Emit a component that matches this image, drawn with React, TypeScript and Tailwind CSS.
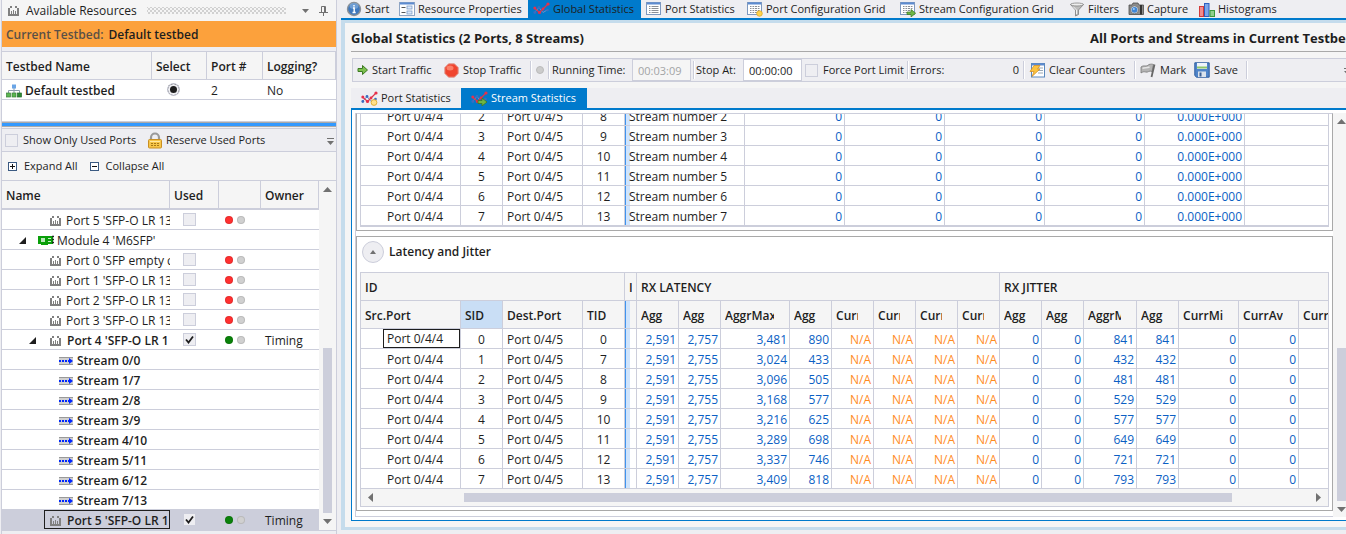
import React from "react";

const PortIcon = () => (
  <svg width="12" height="10" viewBox="0 0 12 10" className="shrink-0" fill="#808080" shapeRendering="crispEdges">
    <path d="M0 2h2V0h2v2H2v6h7V2H7V0h2v2h2v8H0z" />
    <path d="M3 5h1v3H3zM5 4h1v4H5zM7 5h1v3H7z" />
  </svg>
);

const TreeIcon = () => (
  <svg width="16" height="14" viewBox="0 0 16 14" className="shrink-0">
    <path d="M8 4v3M2.500 9V6.500h11V9M8 6v3" stroke="#8a9aaa" fill="none" />
    <rect x="6" y="0.500" width="4" height="4" fill="#6aa5e6" />
    <rect x="0.500" y="9" width="4" height="4" fill="#5cb551" stroke="#38803a" strokeWidth=".7" />
    <rect x="6" y="9" width="4" height="4" fill="#5cb551" stroke="#38803a" strokeWidth=".7" />
    <rect x="11.500" y="9" width="4" height="4" fill="#2f8a35" stroke="#226b2a" strokeWidth=".7" />
  </svg>
);

const LockIcon = () => (
  <svg width="16" height="17" viewBox="0 0 16 17" className="shrink-0">
    <path d="M4 9V5.500a4 4 0 0 1 8 0V9" fill="none" stroke="#9a9a9a" strokeWidth="2.200" />
    <rect x="1.500" y="7.500" width="13" height="8.500" rx="1" fill="#f7c64a" stroke="#c98f22" />
    <path d="M3 9.500h10" stroke="#ffe9a3" />
    <path d="M4 11.500h2m1 0h2m1 0h2M4 13.500h2m1 0h2m1 0h2" stroke="#a97a17" />
  </svg>
);

const ModuleIcon = () => (
  <svg width="17" height="11" viewBox="0 0 17 11" className="shrink-0">
    <path d="M0 1h15v8h-5v1H3V9H0z" fill="#0a9f0a" />
    <rect x="3" y="3" width="4" height="4" fill="#b9e6b9" />
    <path d="M10 3.500h3M10 6.500h3" stroke="#c9eec9" />
    <path d="M14 1.500h2M14 4.500h2M14 7.500h2" stroke="#222" strokeWidth="1.500" />
  </svg>
);

const StreamIcon = () => (
  <svg width="14" height="10" viewBox="0 0 14 10" className="shrink-0">
    <rect y="1" width="14" height="8" fill="#d0d0d0" />
    <path d="M0 1.500h14M0 8.500h14" stroke="#999" />
    <path d="M0 5h10" stroke="#0026ff" strokeWidth="2" strokeDasharray="2 1" />
    <path d="M10 2l4 3-4 3z" fill="#0026ff" />
  </svg>
);

const InfoIcon = () => (
  <svg width="16" height="16" viewBox="0 0 16 16" className="shrink-0">
    <circle cx="8" cy="8" r="6.500" fill="#3f78bd" stroke="#8a9097" strokeWidth="1.400" />
    <ellipse cx="8" cy="5" rx="4.500" ry="3" fill="#8db5e2" opacity=".6" />
    <path d="M8 4v1.600M7 7h1.200v4.500M6.500 11.500h3.200" stroke="#fff" strokeWidth="1.400" fill="none" />
  </svg>
);

const PropsIcon = () => (
  <svg width="16" height="14" viewBox="0 0 16 14" className="shrink-0">
    <rect x=".5" y=".5" width="15" height="13" fill="#fff" stroke="#8fa5c4" />
    <path d="M1 1.500h14" stroke="#5c8bd0" strokeWidth="2" />
    <path d="M2.500 5.500h4M2.500 10.500h4" stroke="#555" />
    <rect x="8" y="4" width="5" height="3" fill="#dbe8fa" stroke="#7f9dc7" strokeWidth=".8" />
    <rect x="8" y="9" width="5" height="3" fill="#dbe8fa" stroke="#7f9dc7" strokeWidth=".8" />
  </svg>
);

const ListIcon = ({ badge }: { badge?: "dot" | "arrow" }) => (
  <svg width="16" height="15" viewBox="0 0 16 15" className="shrink-0">
    <rect x=".5" y=".5" width="14" height="12" fill="#fff" stroke="#7d98bf" />
    <path d="M1 1.500h13" stroke="#5c8bd0" strokeWidth="2" />
    <path d="M3 4.500h1.500M3 6.500h1.500M3 8.500h1.500M3 10.500h1.500M5.500 4.500h7M5.500 6.500h7M5.500 8.500h7M5.500 10.500h7" stroke="#8b8f96" />
    {badge && <path d="M7.500 4v7M10.500 4v7" stroke="#fff" strokeWidth=".8" />}
    {badge === "dot" && <circle cx="12.500" cy="11.500" r="2.800" fill="#ffd34d" stroke="#d8a21c" strokeWidth=".7" />}
    {badge === "arrow" && <path d="M7 10h4V7.500l4.700 3.700L11 15v-2.500H7z" fill="#6fb544" stroke="#3c7a22" strokeWidth=".7" />}
  </svg>
);

const ChartIcon = ({ badge }: { badge?: "dot" | "arrow" }) => (
  <svg width="17" height="15" viewBox="0 0 17 15" className="shrink-0">
    <path d="M1.500 10.500L6 5.500l4 5 5-3" fill="none" stroke="#6a8cc8" />
    <g fill="#3b6cc0">
      <circle cx="1.800" cy="10.500" r="1.400" /><circle cx="6" cy="5.500" r="1.400" /><circle cx="14.500" cy="8" r="1.300" />
    </g>
    <path d="M1.500 6l5 4.500L10 7l5-5" fill="none" stroke="#e0344a" strokeWidth="1.200" />
    <g fill="#e8304a">
      <circle cx="1.800" cy="6" r="1.500" /><circle cx="6.500" cy="10.500" r="1.600" /><circle cx="10" cy="7" r="1.400" /><circle cx="15" cy="2" r="1.600" />
    </g>
    {badge === "dot" && <circle cx="13" cy="11.500" r="2.900" fill="#ffe08a" stroke="#d8a21c" strokeWidth=".8" />}
    {badge === "arrow" && <path d="M7 9.500h4V7l5 4-5 4v-2.500H7z" fill="#6fb544" stroke="#3c7a22" strokeWidth=".8" />}
  </svg>
);

const FunnelIcon = () => (
  <svg width="16" height="15" viewBox="0 0 16 15" className="shrink-0">
    <path d="M1.500 2.500L6.500 8v6l3-1.500V8l5-5.500z" fill="#bdbdbd" stroke="#7c7c7c" strokeWidth=".8" />
    <path d="M4 4.500l3.500 3.500v4" stroke="#f4f4f4" fill="none" />
    <ellipse cx="8" cy="2.500" rx="6.500" ry="1.500" fill="#eee" stroke="#858585" strokeWidth=".8" />
  </svg>
);

const CameraIcon = () => (
  <svg width="16" height="14" viewBox="0 0 16 14" className="shrink-0">
    <path d="M1 3h3l1-2h5l1 2h4.500v9.500H1z" fill="#8b8b8b" stroke="#4c4c4c" strokeWidth=".8" />
    <path d="M13 3v9.500" stroke="#333" strokeWidth="2" />
    <circle cx="6.500" cy="7.800" r="4" fill="#d6dbe2" stroke="#555" strokeWidth=".6" />
    <circle cx="6.500" cy="7.800" r="2.900" fill="#3f86d6" />
    <circle cx="5.800" cy="7" r="1" fill="#a8d0f8" />
  </svg>
);

const HistIcon = () => (
  <svg width="16" height="15" viewBox="0 0 16 15" className="shrink-0">
    <rect x=".5" y="4.500" width="4" height="10" fill="#f28c8c" stroke="#d33a3a" />
    <rect x="5.500" y="1.500" width="4.500" height="13" fill="#7ba6ea" stroke="#2d5fc0" />
    <rect x="11" y="8.500" width="4.500" height="6" fill="#8fd08c" stroke="#3a9a3c" />
  </svg>
);

const StartIcon = () => (
  <svg width="12" height="12" viewBox="0 0 12 12" className="shrink-0">
    <path d="M1 4.500h4.500V1.500L10.500 6l-5 4.500v-3H1z" fill="#7dc04e" stroke="#3c7a22" />
  </svg>
);

const StopIcon = () => (
  <svg width="15" height="15" viewBox="0 0 15 15" className="shrink-0">
    <path d="M4.600.8h5.800l3.800 3.800v5.800l-3.800 3.800H4.600L.8 10.400V4.600z" fill="#f0452f" stroke="#e09a90" />
    <ellipse cx="6" cy="5" rx="3.500" ry="2.500" fill="#ff9a82" opacity=".7" />
  </svg>
);

const ClearIcon = () => (
  <svg width="16" height="15" viewBox="0 0 16 15" className="shrink-0">
    <rect x="2.500" y=".5" width="13" height="13.500" fill="#fff" stroke="#5a88bd" />
    <path d="M3 1.500h12" stroke="#5c8bd0" strokeWidth="2" />
    <path d="M9 5h5M9 7.500h5M9 10h5" stroke="#9aa8b5" />
    <path d="M5 2.500h6L8.500 6H11L3 13.500 5 8.500H1z" fill="#fbc340" stroke="#d08a1c" strokeWidth=".7" />
  </svg>
);

const FlagIcon = () => (
  <svg width="16" height="15" viewBox="0 0 16 15" className="shrink-0">
    <path d="M1 4c3-2.500 5 .5 8-2.500 2-.5 3-.5 4.500 0L12 8.500c-3-1.500-4 1.500-6.500.5-2-.6-3 0-4.500 1z" fill="#b4b4b4" stroke="#777" strokeWidth=".8" />
    <path d="M14.500 1.500L11.500 14" stroke="#666" strokeWidth="1.800" />
    <path d="M2.500 5.500c2-1.500 4 0 7-1.500" stroke="#e4e4e4" strokeWidth="1.500" fill="none" />
  </svg>
);

const SaveIcon = () => (
  <svg width="16" height="16" viewBox="0 0 16 16" className="shrink-0">
    <path d="M.8.800h14.400v14.400H2.500L.8 13.500z" fill="#4f84c9" stroke="#2f5e9e" />
    <rect x="3" y="1" width="10" height="6" fill="#eef4fb" />
    <path d="M3 5.500h10" stroke="#8fc76a" strokeWidth="2" />
    <rect x="4" y="9.500" width="8" height="5.500" fill="#dbe3ec" />
    <rect x="5.500" y="10.500" width="2" height="4" fill="#3a5f94" />
  </svg>
);

const BoxSign = ({ plus }: { plus?: boolean }) => (
  <svg width="9" height="9" viewBox="0 0 9 9" className="shrink-0">
    <rect x=".5" y=".5" width="8" height="8" fill="#fff" stroke="#3b5a82" />
    <path d={plus ? "M2 4.500h5M4.500 2v5" : "M2 4.500h5"} stroke="#111" />
  </svg>
);

const Tri = ({ dir }: { dir: "up" | "down" | "left" | "right" }) => {
  const d = { up: "M0 7L4.500 2 9 7z", down: "M0 2h9L4.500 7z", left: "M7 0v9L2 4.500z", right: "M2 0l5 4.500L2 9z" }[dir];
  return <svg width="9" height="9" viewBox="0 0 9 9" className="shrink-0" fill="#717171"><path d={d} /></svg>;
};

const Overflow = () => (
  <svg width="7" height="8" viewBox="0 0 7 8" className="shrink-0" fill="#717171">
    <path d="M0 0h7v1H0zM0 3h7L3.500 7z" />
  </svg>
);

const Expander = () => (
  <svg width="7" height="7" viewBox="0 0 7 7" className="shrink-0"><path d="M7 0v7H0z" fill="#1e1e1e" /></svg>
);

const Check = ({ label, checked = false }: { label: string; checked?: boolean }) => (
  <span className="relative inline-flex size-[13px] shrink-0">
    <input type="checkbox" aria-label={label} defaultChecked={checked}
      className="peer size-[13px] appearance-none border border-[#cccedb] bg-[#eeeef2]" />
    <svg viewBox="0 0 13 13" className="pointer-events-none absolute inset-0 hidden size-[13px] peer-checked:block">
      <path d="M3 6.500l2.500 3L10 3.500" fill="none" stroke="#1e1e1e" strokeWidth="1.800" />
    </svg>
  </span>
);

type Node = { kind: "port" | "module" | "stream"; name: string; used?: boolean; led?: "red" | "green"; owner?: string; open?: boolean; selected?: boolean };

const nodes: Node[] = [
  { kind: "port", name: "Port 5 'SFP-O LR 13", used: false, led: "red" },
  { kind: "module", name: "Module 4 'M6SFP'", open: true },
  { kind: "port", name: "Port 0 'SFP empty c", used: false, led: "red" },
  { kind: "port", name: "Port 1 'SFP-O LR 13", used: false, led: "red" },
  { kind: "port", name: "Port 2 'SFP-O LR 13", used: false, led: "red" },
  { kind: "port", name: "Port 3 'SFP-O LR 13", used: false, led: "red" },
  { kind: "port", name: "Port 4 'SFP-O LR 1", used: true, led: "green", owner: "Timing", open: true },
  ...["0/0", "1/7", "2/8", "3/9", "4/10", "5/11", "6/12", "7/13"].map((s): Node => ({ kind: "stream", name: `Stream ${s}` })),
  { kind: "port", name: "Port 5 'SFP-O LR 1", used: true, led: "green", owner: "Timing", selected: true },
];

const NodeName = ({ n }: { n: Node }) => {
  if (n.kind === "module")
    return <div className="flex h-[19px] items-center pt-[2px] pl-[17px]"><Expander /><span className="w-3" /><ModuleIcon /><span className="pl-[2px]">{n.name}</span></div>;
  if (n.kind === "stream")
    return <div className="flex h-[19px] items-center gap-1 pt-[2px] pl-[57px] font-semibold"><StreamIcon />{n.name}</div>;
  return (
    <div className={n.selected ? "ml-[42px] flex h-[19px] items-center border border-[#1e1e1e] pt-[2px]" : "flex h-[19px] items-center pt-[2px] pl-[27px]"}>
      <span className={n.selected ? "w-[5px] shrink-0" : "w-[21px] shrink-0"}>{n.open && <Expander />}</span>
      <PortIcon />
      <span className={n.used ? "overflow-hidden pl-[5px] font-semibold" : "overflow-hidden pl-1"}>{n.name}</span>
    </div>
  );
};

const Led = ({ color }: { color: string }) => <span className={`size-2 rounded-full border border-black/10 ${color}`} />;

const thBase = "border-r border-[#cccedb] p-0 pt-[2px] pl-1 text-left font-semibold";
const th = thBase + " h-7 border-b bg-[#f5f5f5]";
const thTall = thBase + " h-[29px] border-b-2 bg-[#f5f5f5]";
const line = "h-5 border-b border-[#cccedb] p-0";

function ResourcesPanel() {
  return (
    <aside className="ml-px w-[336px] shrink-0 border-x border-[#cccedb]">
      <header className="flex h-[21px] items-center bg-[#f5f5f5] pr-2 pl-[6px]">
        <PortIcon />
        <h2 className="pl-[6px]">Available Resources</h2>
        <span className="ml-[10px] h-[7px] flex-1 bg-[radial-gradient(circle,#aaa_0.5px,transparent_0.9px),radial-gradient(circle,#aaa_0.5px,transparent_0.9px)] bg-[size:4px_4px] bg-[position:0_0,2px_2px]" />
        <button aria-label="Panel menu" className="ml-4"><svg width="7" height="4" viewBox="0 0 7 4"><path d="M0 0h7L3.500 4z" fill="#717171" /></svg></button>
        <button aria-label="Pin panel" className="ml-[10px]">
          <svg width="9" height="10" viewBox="0 0 9 10" fill="none" stroke="#717171"><path d="M2.500 6V.5h4V6M5.500 0v6M0 6.500h9M4.500 6v4" /></svg>
        </button>
      </header>
      <div className="flex h-[26px] items-center gap-[5px] bg-[#fca13c] pt-px pl-1 font-semibold">
        <span className="text-[#5a5046]">Current Testbed:</span><span>Default testbed</span>
      </div>
      <div className="mt-1 h-[71px] border-y border-[#cccedb] bg-white">
        <table className="w-full table-fixed border-separate border-spacing-0">
          <colgroup><col className="w-[150px]" /><col className="w-[55px]" /><col className="w-14" /><col /></colgroup>
          <thead><tr><th className={th}>Testbed Name</th><th className={th}>Select</th><th className={th}>Port #</th><th className={th}>Logging?</th></tr></thead>
          <tbody>
            <tr>
              <td className={line + " pt-[2px] pl-1 font-semibold"}><div className="flex items-center gap-[3px]"><TreeIcon />Default testbed</div></td>
              <td className={line + " pr-3"}>
                <div className="flex justify-center">
                  <input type="radio" name="testbed" defaultChecked aria-label="Select Default testbed"
                    className="size-[13px] appearance-none rounded-full border border-[#cccedb] bg-[#1e1e1e] shadow-[inset_0_0_0_2px_#eeeef2]" />
                </div>
              </td>
              <td className={line + " pt-[2px] pl-1"}>2</td>
              <td className={line + " pt-[2px] pl-1"}>No</td>
            </tr>
          </tbody>
        </table>
      </div>
      <div className="h-[5px] border-y border-[#a9a9a9] bg-[#3399ff]" />
      <div className="mt-px flex h-6 items-center border-y border-[#cccedb] bg-[#eeeef2] pr-[2px] pl-[3px] text-[11px]">
        <label className="flex w-[142px] items-center gap-[5px]"><Check label="Show Only Used Ports" />Show Only Used Ports</label>
        <button className="flex items-center gap-[3px]"><LockIcon />Reserve Used Ports</button>
        <button aria-label="More options" className="mt-1 ml-auto"><Overflow /></button>
      </div>
      <div className="flex h-[28px] items-center gap-3 bg-[#f5f5f5] pl-[6px] text-[11px]">
        <button className="flex items-center gap-[7px]"><BoxSign plus />Expand All</button>
        <button className="flex items-center gap-[7px]"><BoxSign />Collapse All</button>
      </div>
      <div className="flex border-y border-[#cccedb]">
        <div className="min-w-0 flex-1">
          <table className="w-full table-fixed border-separate border-spacing-0 bg-white">
            <colgroup><col className="w-[168px]" /><col className="w-[49px]" /><col className="w-[42px]" /><col /></colgroup>
            <thead><tr><th className={thTall}>Name</th><th className={thTall}>Used</th><th className={thTall} aria-label="Link" /><th className={thTall}>Owner</th></tr></thead>
            <tbody>
              {nodes.map((n, i) => (
                <tr key={i} className={n.selected ? "bg-[#cccedb]" : "bg-white"}>
                  <td className={line + " overflow-hidden whitespace-nowrap"}><NodeName n={n} /></td>
                  <td className={line + " pl-[13px]"}>{n.used !== undefined && <span className="flex"><Check label={`Use ${n.name}`} checked={n.used} /></span>}</td>
                  <td className={line + " pl-[6px]"}>
                    {n.led && <span className="flex gap-1"><Led color={n.led === "red" ? "bg-[#ff3030]" : "bg-[#0a820a]"} /><Led color="bg-[#d0d0d0]" /></span>}
                  </td>
                  <td className={line + " pt-[2px] pl-1"}>{n.owner}</td>
                </tr>
              ))}
            </tbody>
          </table>
        </div>
        <div className="flex w-[17px] flex-col items-center bg-[#f5f5f5] py-1">
          <Tri dir="up" />
          <div className="mt-auto h-[165px] w-[9px] bg-[#cccedb]" />
          <span className="pt-1"><Tri dir="down" /></span>
        </div>
      </div>
    </aside>
  );
}

const tabs = [
  { label: "Start", icon: <InfoIcon />, w: "w-[53px]" },
  { label: "Resource Properties", icon: <PropsIcon />, w: "w-[134px]" },
  { label: "Global Statistics", icon: <ChartIcon />, w: "w-[113px]", active: true },
  { label: "Port Statistics", icon: <ListIcon />, w: "w-[101px]" },
  { label: "Port Configuration Grid", icon: <ListIcon badge="dot" />, w: "w-[153px]" },
  { label: "Stream Configuration Grid", icon: <ListIcon badge="arrow" />, w: "w-[169px]" },
  { label: "Filters", icon: <FunnelIcon />, w: "w-[59px]" },
  { label: "Capture", icon: <CameraIcon />, w: "w-[71px]" },
  { label: "Histograms", icon: <HistIcon />, w: "w-[90px]" },
];

const Sep = () => <span className="h-[18px] w-[2px] shrink-0 border-l border-[#cccedb] bg-white" />;

function Toolbar() {
  return (
    <div className="mt-[6px] -mr-2 ml-px flex h-6 items-center border border-[#cccedb] bg-[#eeeef2] pl-1 text-[11px] whitespace-nowrap">
      <button className="flex w-[87px] shrink-0 items-center gap-[3px]"><StartIcon />Start Traffic</button>
      <button className="flex w-[86px] shrink-0 items-center gap-1"><StopIcon />Stop Traffic</button>
      <Sep />
      <span className="mx-1 size-2 shrink-0 rounded-full border border-[#bbb] bg-[#ccc]" />
      <Sep />
      <label className="flex shrink-0 items-center">
        <span className="w-[82px] pl-[2px]">Running Time:</span>
        <input disabled defaultValue="00:03:09" className="h-[22px] w-[59px] border border-[#cccedb] bg-[#f5f5f5] px-[5px] text-[#a2a4a5]" />
      </label>
      <span className="w-[2px]" /><Sep />
      <label className="flex shrink-0 items-center">
        <span className="w-[48px] pl-px">Stop At:</span>
        <input defaultValue="00:00:00" className="h-[22px] w-[59px] border border-[#cccedb] bg-white px-[5px]" />
      </label>
      <label className="ml-[3px] flex w-[102px] shrink-0 items-center gap-[5px]"><Check label="Force Port Limit" />Force Port Limit</label>
      <Sep />
      <span className="flex w-[114px] shrink-0 justify-between pr-1 pl-px"><span>Errors:</span><span>0</span></span>
      <Sep />
      <button className="flex w-[109px] shrink-0 items-center gap-1 pl-1"><ClearIcon />Clear Counters</button>
      <Sep />
      <button className="flex w-[58px] shrink-0 items-center gap-1 pl-1"><FlagIcon />Mark</button>
      <button className="flex w-[52px] shrink-0 items-center gap-1"><SaveIcon />Save</button>
      <Sep />
      <button aria-label="More tools" className="mt-1 mr-[2px] ml-auto"><Overflow /></button>
    </div>
  );
}

const cell = "h-5 border-r border-b border-[#cccedb] p-0 pt-[2px]";
const boxCell = "h-5 border-r border-b border-[#cccedb] p-0";
const num = cell + " pr-[2px] text-right text-[#0b5fc4]";

function StreamGrid() {
  const rows = [[2, 8], [3, 9], [4, 10], [5, 11], [6, 12], [7, 13]];
  return (
    <div className="flex h-[118px] items-end overflow-hidden border border-[#a9a9a9] border-t-[#cccedb] bg-white px-[3px] pb-[3px]">
      <table className="w-full table-fixed border-separate border-spacing-0 border-b border-l border-[#cccedb]">
        <colgroup>
          <col className="w-[100px]" /><col className="w-[42px]" /><col className="w-20" /><col className="w-[42px]" /><col className="w-[120px]" />
          <col className="w-[100px]" /><col className="w-[100px]" /><col className="w-[100px]" /><col className="w-[100px]" /><col className="w-[100px]" /><col />
        </colgroup>
        <tbody>
          {rows.map(([sid, tid]) => (
            <tr key={sid}>
              <td className={cell + " pl-[26px]"}>Port 0/4/4</td>
              <td className={cell + " text-center"}>{sid}</td>
              <td className={cell + " pl-1"}>Port 0/4/5</td>
              <td className={cell + " text-center"}>{tid}</td>
              <td className={boxCell}>
                <div className="flex h-[19px] items-center border-l border-[#3f93ee] bg-linear-to-r from-[#cfe4fc] from-[4px] to-transparent to-[4px] pt-[2px] pl-[3px] whitespace-nowrap">Stream number {sid}</div>
              </td>
              {[0, 1, 2, 3].map((c) => <td key={c} className={num}>0</td>)}
              <td className={num}>0.000E+000</td>
              <td className={cell} />
            </tr>
          ))}
        </tbody>
      </table>
    </div>
  );
}

const latency = [
  ["0", "0", "2,591", "2,757", "3,481", "890", "841"],
  ["1", "7", "2,591", "2,755", "3,024", "433", "432"],
  ["2", "8", "2,591", "2,755", "3,096", "505", "481"],
  ["3", "9", "2,591", "2,755", "3,168", "577", "529"],
  ["4", "10", "2,591", "2,757", "3,216", "625", "577"],
  ["5", "11", "2,591", "2,755", "3,289", "698", "649"],
  ["6", "12", "2,591", "2,757", "3,337", "746", "721"],
  ["7", "13", "2,591", "2,757", "3,409", "818", "793"],
];

const Head = ({ children }: { children: string }) => <th className={th}><div className="mr-[15px] overflow-hidden">{children}</div></th>;

function LatencyGrid() {
  return (
    <section className="mt-[5px] border border-[#a9a9a9] bg-white px-[3px] pb-[3px]">
      <div className="flex h-[35px] items-center gap-[5px] pb-[5px] pl-[2px]">
        <button aria-label="Collapse Latency and Jitter" className="flex size-[22px] items-center justify-center rounded-full border border-[#cccedb] bg-[#eeeef2]">
          <svg width="6" height="4" viewBox="0 0 6 4"><path d="M0 4l3-4 3 4z" fill="#717171" /></svg>
        </button>
        <h3 className="font-semibold">Latency and Jitter</h3>
      </div>
      <div className="border border-[#cccedb]">
        <table className="-mr-px w-full table-fixed border-separate border-spacing-0 overflow-hidden whitespace-nowrap">
          <colgroup>
            <col className="w-[100px]" /><col className="w-[42px]" /><col className="w-20" /><col className="w-[42px]" /><col className="w-3" />
            <col className="w-[42px]" /><col className="w-[42px]" /><col className="w-[69px]" /><col className="w-[42px]" />
            <col className="w-[42px]" /><col className="w-[42px]" /><col className="w-[42px]" /><col className="w-[42px]" />
            <col className="w-[42px]" /><col className="w-[42px]" /><col className="w-[53px]" /><col className="w-[42px]" />
            <col className="w-[60px]" /><col className="w-[60px]" /><col />
          </colgroup>
          <thead>
            <tr>
              <th colSpan={4} className={th}>ID</th>
              <th className={th}><div className="w-[3px] overflow-hidden">I</div></th>
              <th colSpan={8} className={th}>RX LATENCY</th>
              <th colSpan={7} className={th + " border-r-0"}>RX JITTER</th>
            </tr>
            <tr>
              <th className={th}>Src.Port</th>
              <th className={thBase + " h-7 border-b bg-[#c9def5]"}>SID</th>
              <th className={th}>Dest.Port</th>
              <th className={th}>TID</th>
              <th className="h-7 border-r border-b border-[#cccedb] bg-[#f5f5f5] p-0"><div className="h-[27px] w-[5px] border-l border-[#3f93ee] bg-[#cfe4fc]" /></th>
              <Head>Agg</Head><Head>Agg</Head><Head>AggrMax</Head><Head>Agg</Head>
              <Head>Curr</Head><Head>Curr</Head><Head>Curr</Head><Head>Curr</Head>
              <Head>Agg</Head><Head>Agg</Head><Head>AggrM</Head><Head>Agg</Head>
              <Head>CurrMi</Head><Head>CurrAv</Head>
              <th className={th + " overflow-hidden border-r-0"}>Curr</th>
            </tr>
          </thead>
          <tbody>
            {latency.map(([sid, tid, min, avg, max, jit, jmax], i) => (
              <tr key={sid}>
                <td className={boxCell + " pl-[22px]"}><div className={i === 0 ? "h-[19px] border border-[#1e1e1e] pt-px pl-[3px]" : "pt-[2px] pl-1"}>Port 0/4/4</div></td>
                <td className={cell + " text-center"}>{sid}</td>
                <td className={cell + " pl-1"}>Port 0/4/5</td>
                <td className={cell + " text-center"}>{tid}</td>
                <td className={boxCell}><div className="h-[19px] w-[5px] border-l border-[#3f93ee] bg-[#cfe4fc]" /></td>
                <td className={num}>{min}</td><td className={num}>{avg}</td><td className={num}>{max}</td><td className={num}>{jit}</td>
                {[0, 1, 2, 3].map((c) => <td key={c} className={cell + " pr-[2px] text-right text-[#ff8c1f]"}>N/A</td>)}
                <td className={num}>0</td><td className={num}>0</td><td className={num}>{jmax}</td><td className={num}>{jmax}</td>
                <td className={num}>0</td><td className={num}>0</td><td className={cell + " border-r-0"} />
              </tr>
            ))}
          </tbody>
        </table>
        <div className="flex h-[17px] items-center bg-[#f5f5f5] px-[5px]">
          <Tri dir="left" />
          <div className="mr-[82px] ml-[89px] h-[9px] flex-1 bg-[#cccedb]" />
          <Tri dir="right" />
        </div>
      </div>
    </section>
  );
}

export default function App() {
  return (
    <div className="flex min-h-screen overflow-hidden bg-[#eeeef2] font-['Open_Sans','Noto_Sans',sans-serif] text-[12px] leading-4 text-[#1e1e1e]">
      <ResourcesPanel />
      <main className="ml-1 min-w-0 flex-1">
        <nav className="flex h-[20px] border-b-2 border-[#007acc] text-[11px]">
          {tabs.map((t) => (
            <button key={t.label} className={`${t.w} flex shrink-0 items-center gap-[3px] pl-[5px] whitespace-nowrap ${t.active ? "bg-[#007acc]" : ""}`}>
              {t.icon}{t.label}
            </button>
          ))}
        </nav>
        <div className="overflow-hidden border-t-[3px] border-b-[3px] border-l-4 border-[#c5dcec] bg-[#f5f5f5] pb-[6px] pl-[6px]">
          <div className="-mr-2 flex h-[29px] items-center justify-between border-b border-[#a9a9a9] pt-px text-[13px] font-bold whitespace-nowrap">
            <h1>Global Statistics (2 Ports, 8 Streams)</h1>
            <span>All Ports and Streams in Current Testbed</span>
          </div>
          <Toolbar />
          <div className="mt-[6px] flex h-[22px] border-b-2 border-[#007acc] bg-[#eeeef2] text-[11px] whitespace-nowrap">
            <button className="flex w-[110px] items-center gap-[3px] pl-[10px]"><ChartIcon badge="dot" />Port Statistics</button>
            <button className="flex w-[126px] items-center gap-[3px] bg-[#007acc] pl-[10px] text-white"><ChartIcon badge="arrow" />Stream Statistics</button>
          </div>
          <div className="flex border-b border-l border-[#007acc] bg-white pt-[3px] pb-[3px] pl-[3px]">
            <div className="min-w-0 flex-1 border-b border-l border-[#cccedb] pb-[5px]">
              <StreamGrid />
              <LatencyGrid />
            </div>
            <div className="flex w-[13px] flex-col items-end overflow-hidden bg-[#f5f5f5] pt-1 pb-[3px]">
              <Tri dir="up" />
              <div className="mt-auto mb-1 h-[153px] w-[9px] bg-[#cccedb]" />
              <Tri dir="down" />
            </div>
          </div>
        </div>
      </main>
    </div>
  );
}
